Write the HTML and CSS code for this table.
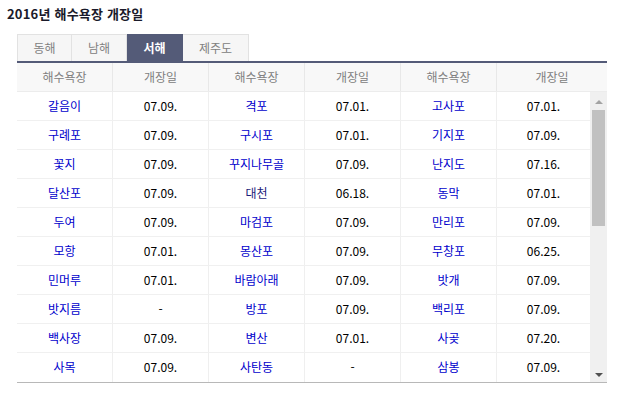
FILE: index.html
```html
<!DOCTYPE html>
<html lang="ko">
<head>
<meta charset="utf-8">
<title>2016년 해수욕장 개장일</title>
<link rel="stylesheet" href="styles.css">
</head>
<body>
<h1 class="title">2016년 해수욕장 개장일</h1>
<div class="board">
  <ul class="tabs">
    <li class="tab">동해</li>
    <li class="tab">남해</li>
    <li class="tab active">서해</li>
    <li class="tab">제주도</li>
  </ul>
  <div class="table">
    <div class="thead">
      <div class="th">해수욕장</div><div class="th">개장일</div>
      <div class="th">해수욕장</div><div class="th">개장일</div>
      <div class="th">해수욕장</div><div class="th last">개장일</div>
    </div>
    <div class="body-wrap">
      <div class="tbody">
        <div class="row"><a class="td name">갈음이</a><span class="td">07.09.</span><a class="td name">격포</a><span class="td">07.01.</span><a class="td name">고사포</a><span class="td last">07.01.</span></div>
        <div class="row"><a class="td name">구례포</a><span class="td">07.09.</span><a class="td name">구시포</a><span class="td">07.01.</span><a class="td name">기지포</a><span class="td last">07.09.</span></div>
        <div class="row"><a class="td name">꽃지</a><span class="td">07.09.</span><a class="td name">꾸지나무골</a><span class="td">07.09.</span><a class="td name">난지도</a><span class="td last">07.16.</span></div>
        <div class="row"><a class="td name">달산포</a><span class="td">07.09.</span><a class="td name visited">대천</a><span class="td">06.18.</span><a class="td name">동막</a><span class="td last">07.01.</span></div>
        <div class="row"><a class="td name">두여</a><span class="td">07.09.</span><a class="td name">마검포</a><span class="td">07.09.</span><a class="td name">만리포</a><span class="td last">07.09.</span></div>
        <div class="row"><a class="td name">모항</a><span class="td">07.01.</span><a class="td name">몽산포</a><span class="td">07.09.</span><a class="td name">무창포</a><span class="td last">06.25.</span></div>
        <div class="row"><a class="td name">민머루</a><span class="td">07.01.</span><a class="td name">바람아래</a><span class="td">07.09.</span><a class="td name">밧개</a><span class="td last">07.09.</span></div>
        <div class="row"><a class="td name">밧지름</a><span class="td">-</span><a class="td name">방포</a><span class="td">07.09.</span><a class="td name">백리포</a><span class="td last">07.09.</span></div>
        <div class="row"><a class="td name">백사장</a><span class="td">07.09.</span><a class="td name">변산</a><span class="td">07.01.</span><a class="td name">사곶</a><span class="td last">07.20.</span></div>
        <div class="row"><a class="td name">사목</a><span class="td">07.09.</span><a class="td name">사탄동</a><span class="td">-</span><a class="td name">삼봉</a><span class="td last">07.09.</span></div>
      </div>
      <div class="scrollbar">
        <span class="arrow up"></span>
        <div class="track"><div class="thumb"></div></div>
        <span class="arrow down"></span>
      </div>
    </div>
  </div>
</div>
</body>
</html>
```
FILE: styles.css
```css
* { box-sizing: border-box; }
html, body { margin: 0; padding: 0; background: #fff; }
body {
  font-family: "Noto Sans CJK KR", "Noto Sans", sans-serif;
  font-size: 12px;
  color: #111;
  padding: 4px 0 0 7px;
}
.title {
  margin: 0;
  font-size: 13px;
  font-weight: bold;
  line-height: 19px;
  color: #1a1a2a;
  letter-spacing: 0.2px;
}
.board {
  margin: 11px 0 0 10px;
  width: 590px;
}
.tabs {
  list-style: none;
  margin: 0;
  padding: 0;
  display: flex;
}
.tab {
  height: 27px;
  line-height: 26px;
  padding: 0 15px;
  background: #f6f6f6;
  border: 1px solid #e2e2e2;
  border-bottom: none;
  border-left: none;
  color: #808080;
  font-size: 12px;
  text-align: center;
}
.tab:first-child { border-left: 1px solid #e2e2e2; width: 55px; }
.tab:nth-child(2) { width: 55px; }
.tab:nth-child(3) { width: 56px; }
.tab:nth-child(4) { width: 66px; }
.tab.active {
  background: #545b78;
  border-color: #545b78;
  color: #fff;
  font-weight: bold;
}
.table {
  border-top: 2px solid #545b78;
  border-bottom: 1px solid #b8b8b8;
}
.thead {
  display: grid;
  grid-template-columns: repeat(5, 96px) 1fr;
  height: 29px;
  background: #f8f8f8;
  border-bottom: 1px solid #ececec;
}
.th {
  text-align: center;
  line-height: 28px;
  color: #808080;
  border-right: 1px solid #e8e8e8;
}
.th.last { border-right: none; }
.body-wrap {
  display: flex;
  height: 290px;
}
.tbody {
  width: 573px;
}
.row {
  display: grid;
  grid-template-columns: repeat(5, 96px) 1fr;
  height: 29px;
  border-bottom: 1px solid #f0f0f0;
}
.row:last-child { border-bottom: none; }
.td {
  text-align: center;
  line-height: 28px;
  border-right: 1px solid #efefef;
  color: #000;
  text-decoration: none;
}
.td.last { border-right: none; }
.td.name { color: #0000cc; }
.td.name.visited { color: #1c1c7a; }
.scrollbar {
  width: 17px;
  background: #f0f0f0;
  display: flex;
  flex-direction: column;
  align-items: center;
}
.arrow {
  height: 17px;
  width: 17px;
  display: flex;
  align-items: center;
  justify-content: center;
}
.arrow::before {
  content: "";
  width: 0;
  height: 0;
  border-left: 4px solid transparent;
  border-right: 4px solid transparent;
}
.arrow.up::before { border-bottom: 4px solid #a3a3a3; margin-top: 2px; }
.arrow.down::before { border-top: 4px solid #505050; margin-top: 2px; }
.track {
  flex: 1;
  width: 17px;
  padding: 1px 2px 0;
}
.thumb {
  height: 116px;
  background: #c1c1c1;
}
```
